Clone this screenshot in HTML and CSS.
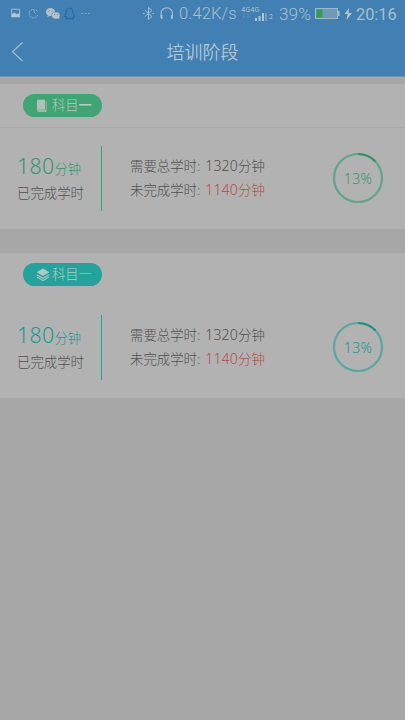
FILE: index.html
```html
<!DOCTYPE html>
<html lang="zh-CN">
<head>
<meta charset="utf-8">
<title>培训阶段</title>
<link rel="stylesheet" href="styles.css">
</head>
<body>
<header class="header">
  <div class="status">
    <svg class="notices" width="84" height="16" viewBox="0 0 84 16">
      <rect x="1.6" y="3.2" width="8" height="7.6" fill="none" stroke="#9dbbd0"/>
      <path d="M2 10V8l2.500-1.500L6.500 8l3-.5V11H2z" fill="#b4c5d0"/>
      <path d="M22.500 3.500a4.300 4.300 0 1 0 5 5.500M24 3v3l2 2M26 4l1.500 1" fill="none" stroke="#8db2cf" stroke-dasharray="2 .7"/>
      <ellipse cx="40.500" cy="6" rx="4.600" ry="4" fill="#b4c0c8"/>
      <path d="M38 9l-1 2.500 3-2z" fill="#b4c0c8"/>
      <ellipse cx="45.800" cy="9.500" rx="4.100" ry="3.400" fill="#b9c2c8" stroke="#427fb2" stroke-width=".5"/>
      <path d="M47 12l2.300 1.300-.5-2.300z" fill="#b9c2c8"/>
      <g fill="#427fb2"><circle cx="39" cy="5" r=".6"/><circle cx="42" cy="5" r=".6"/><circle cx="44.600" cy="8.600" r=".5"/><circle cx="47.300" cy="8.600" r=".5"/></g>
      <path d="M56.500 12.800h3l.5-.7.500.7h3l-.5-2 1.200.2c0-2-.7-3-1.200-4 0-3-1.300-4.800-3.400-4.800S56 4 56 7c-.8 1.300-1.200 2.500-1.200 4l1.300-.3z" fill="none" stroke="#1d66a8"/>
      <g fill="#769fc0"><rect x="71" y="7" width="2" height="1"/><rect x="74.500" y="7" width="2" height="1"/><rect x="78" y="7" width="2" height="1"/></g>
    </svg>
    <svg class="radio" width="34" height="16" viewBox="0 0 34 16">
      <path d="M3 4.500l7 6-3.500 3V1.500l3.500 3-7 6M1 7.500h1.500M10.500 7.500H12" fill="none" stroke="#a3bed1"/>
      <path d="M19 12V7.500a5.700 5.700 0 0 1 11.400 0V12" fill="none" stroke="#a9c0d0" stroke-width="1.100"/>
      <path d="M19 9h1.500v4H19zM29 9h1.500v4H29z" fill="#a9c0d0"/>
    </svg>
    <span class="speed">0.42K/s</span>
    <span class="network"><span class="bands">4G4G</span><svg width="28" height="9" viewBox="0 0 28 9"><path d="M3 1v4M7 1v4" stroke="#719bbb" stroke-dasharray="1.500 .7"/><path d="M14 5h2v3h-2zM17.500 3h2v5h-2zM21 0h2v8h-2z" fill="#b4c4d0"/><path d="M24 0h2v8h-2z" fill="#739bbd"/></svg></span>
    <span class="sim">2</span>
    <span class="percent">39%</span>
    <svg class="battery" width="38" height="16" viewBox="0 0 38 16">
      <rect x=".5" y="2.500" width="22" height="10" fill="#7199b5" stroke="#9db8ca"/>
      <rect x="1.500" y="3.500" width="6" height="8" fill="#2f9c50"/>
      <path d="M23 5h1.500v5H23z" fill="#a9c0cf"/>
      <path d="M34 2l-4.500 6h3.200L31.500 14l5.500-7h-3.500z" fill="#b5c5ce"/>
    </svg>
    <span class="time">20:16</span>
  </div>
  <nav class="nav">
    <svg class="back" width="14" height="22" viewBox="0 0 14 22"><path d="M11.500 1.500L1.500 10.800l10 9.200" fill="none" stroke="#a5bfd1" stroke-width="1.200"/></svg>
    <h1 class="title">培训阶段</h1>
  </nav>
</header>
<main class="stages">
  <section class="card green">
    <div class="card-head lined">
      <span class="badge"><svg width="14" height="14" viewBox="0 0 14 14"><path d="M1 .8h8v10H2L1 12z" fill="#b2c0b8"/><path d="M10.200 2v10.500H1.500M1 11.500h9" fill="none" stroke="#98b9a8"/></svg><span>科目<span class="bold">一</span></span></span>
    </div>
    <div class="card-body">
      <div class="done"><p class="amount">180<small>分钟</small></p><p class="caption">已完成学时</p></div>
      <div class="totals"><p>需要总学时: <span class="value"><span class="num">1320</span>分钟</span></p><p>未完成学时: <span class="value red"><span class="num">1140</span>分钟</span></p></div>
      <div class="progress"><svg width="52" height="52" viewBox="0 0 52 52"><circle class="track" cx="26" cy="26" r="24"/><circle class="arc" cx="26" cy="26" r="24" pathLength="100" stroke-dasharray="13 87" transform="rotate(-90 26 26)"/></svg><span>13%</span></div>
    </div>
  </section>
  <section class="card teal">
    <div class="card-head">
      <span class="badge"><svg width="14" height="14" viewBox="0 0 14 14"><path d="M7 .5l6.300 3.800L7 8 .7 4.300z" fill="#b2c7c6"/><path d="M1 6.700l6 3.500 6-3.500M1 9l6 3.500L13 9" fill="none" stroke="#a5c3c1" stroke-width="1.200"/></svg><span>科目<span class="thin">一</span></span></span>
    </div>
    <div class="card-body">
      <div class="done"><p class="amount">180<small>分钟</small></p><p class="caption">已完成学时</p></div>
      <div class="totals"><p>需要总学时: <span class="value"><span class="num">1320</span>分钟</span></p><p>未完成学时: <span class="value red"><span class="num">1140</span>分钟</span></p></div>
      <div class="progress"><svg width="52" height="52" viewBox="0 0 52 52"><circle class="track" cx="26" cy="26" r="24"/><circle class="arc" cx="26" cy="26" r="24" pathLength="100" stroke-dasharray="13 87" transform="rotate(-90 26 26)"/></svg><span>13%</span></div>
    </div>
  </section>
</main>
</body>
</html>
```
FILE: styles.css
```css
* { box-sizing: border-box; }
body {
  margin: 0;
  width: 405px;
  height: 720px;
  overflow: hidden;
  background: #a7a7a7;
  color: #505050;
  font-family: "Noto Sans", "Noto Sans CJK SC", sans-serif;
  font-weight: 300;
}
h1, p { margin: 0; font-weight: inherit; }
svg { display: block; flex: none; }
.header { height: 77px; background: #427fb2; border-bottom: 1px solid #6b93b5; }
.status {
  display: flex;
  align-items: center;
  height: 28px;
  padding-left: 10px;
  color: #a9c0d0;
  font-family: Roboto, sans-serif;
  font-size: 16px;
  line-height: 28px;
  font-weight: 400;
  white-space: nowrap;
}
.status > * { flex: none; }
.radio { margin-left: 48px; }
.speed { width: 62px; padding-left: 3px; font-size: 16.5px; font-weight: 350; letter-spacing: .15px; }
.network { width: 31px; padding-left: 3px; }
.bands { display: block; font-size: 7.500px; line-height: 6px; }
.sim { width: 10px; font-size: 7px; padding-top: 5px; }
.percent { width: 36px; font-size: 17.3px; font-weight: 350; }
.battery { margin-right: 3px; }
.time { font-size: 16.3px; padding-top: 1px; }
.nav {
  display: grid;
  grid-template-columns: 44px 1fr 44px;
  align-items: center;
  height: 48px;
}
.back { margin-left: 11px; }
.title {
  text-align: center;
  font-size: 18px;
  line-height: 24px;
  font-weight: 350;
  color: #b0c7d7;
}
.stages { display: grid; gap: 24px; padding-top: 7px; }
.card { height: 145px; background: #b2b2b2; }
.card-head {
  height: 44px;
  padding: 10px 0 0 23px;
  border-bottom: 1px solid transparent;
}
.lined { border-bottom-color: #a6a6a6; }
.badge {
  display: flex;
  align-items: center;
  gap: 2px;
  width: 79px;
  height: 23px;
  padding-left: 13px;
  border-radius: 12px;
  background: var(--fill);
  color: #b8cdc3;
  font-size: 13.3px;
  line-height: 23px;
  font-weight: 300;
}
.thin { font-weight: 100; }
.bold { font-weight: 500; }
.green { --fill: #40a474; --text: #359570; --line: #30a873; --track: #60a58a; --arc: #3b8e6a; }
.teal { --fill: #25a29c; --text: #209792; --line: #18a69f; --track: #5ba6a1; --arc: #258f8a; }
.card-body {
  display: grid;
  grid-template-columns: 102px 1fr 72px;
  height: 101px;
  padding-top: 18px;
}
.done {
  height: 65px;
  padding: 4px 0 0 17px;
  border-right: 1px solid var(--line);
  white-space: nowrap;
}
.amount { height: 31px; line-height: 31px; font-size: 21.300px; letter-spacing: .3px; color: var(--text); }
.amount small { font-size: 13.3px; letter-spacing: 0; }
.caption { font-size: 13.4px; line-height: 24px; }
.totals { padding: 8px 0 0 28px; font-size: 13.4px; line-height: 23.500px; white-space: nowrap; }
.totals p { display: flex; align-items: baseline; height: 23.5px; }
.value { margin-left: 5px; }
.num { font-size: 14px; letter-spacing: .2px; }
.red { color: #b34f4c; }
.progress {
  display: grid;
  place-items: center;
  align-self: start;
  width: 52px;
  height: 52px;
  margin-top: 6px;
  margin-left: -1px;
  color: var(--text);
  font-size: 14px;
  letter-spacing: .3px;
}
.progress > * { grid-area: 1 / 1; }
.track, .arc { fill: none; stroke: var(--track); stroke-width: 2.2; }
.arc { stroke: var(--arc); }
```
